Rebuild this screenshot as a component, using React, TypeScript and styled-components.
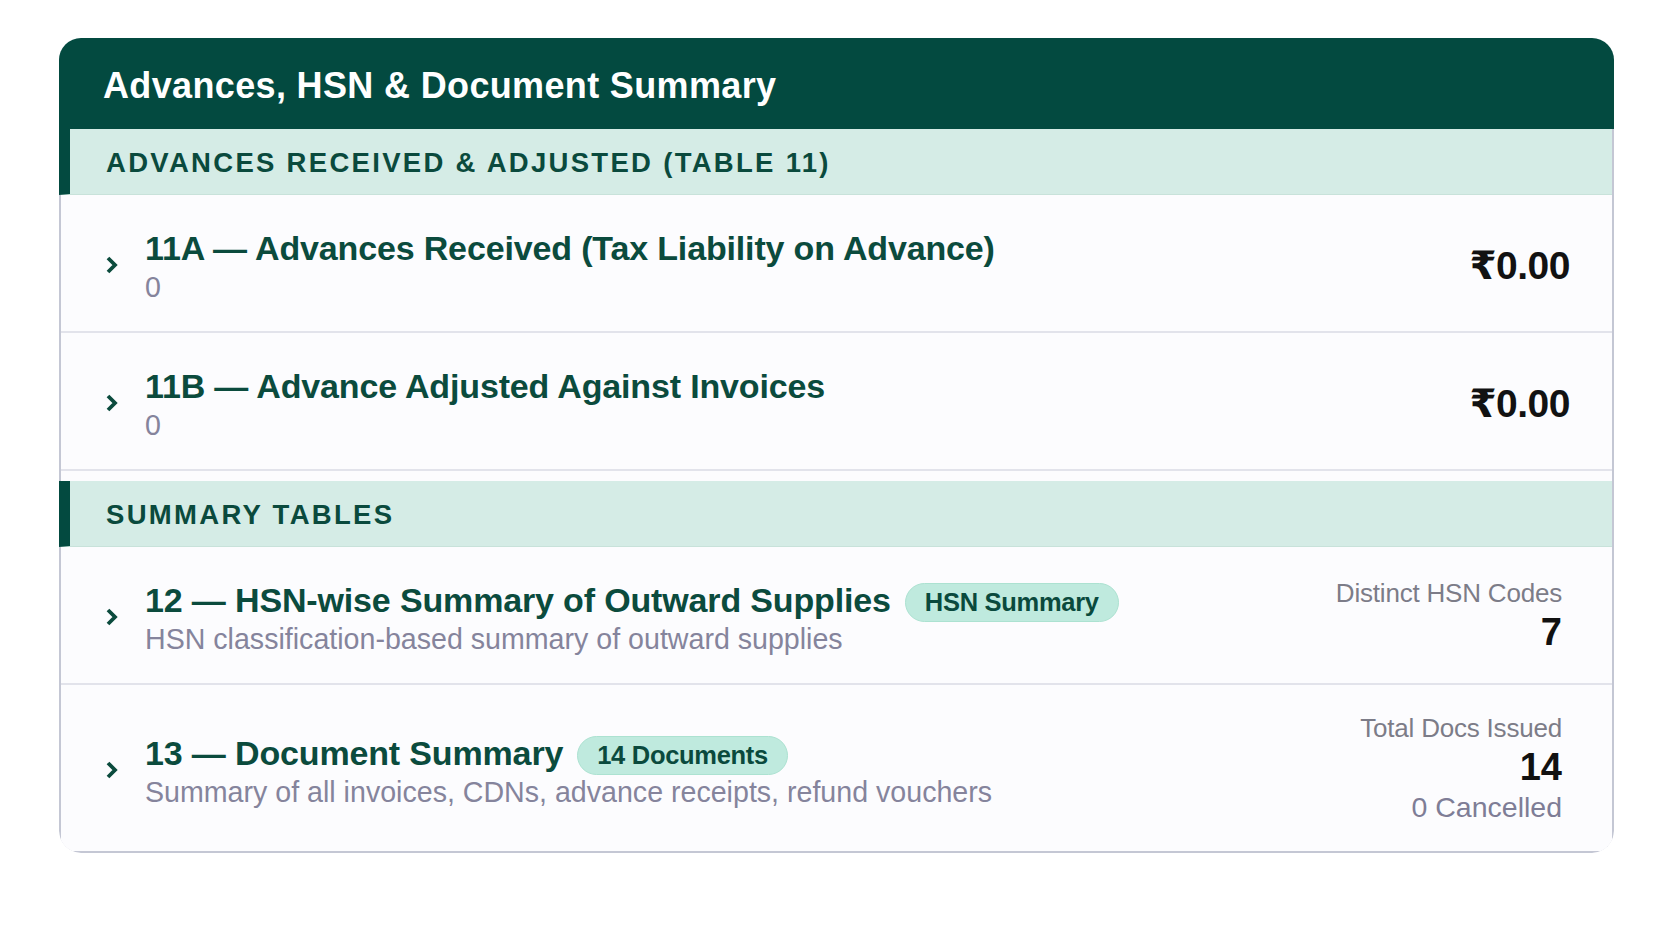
import React from "react";
import styled, { createGlobalStyle } from "styled-components";

const GlobalStyle = createGlobalStyle`
  html, body {
    margin: 0;
    padding: 0;
    background: #ffffff;
  }
  body {
    font-family: "Liberation Sans", Arial, "DejaVu Sans", sans-serif;
  }
`;

type Row = {
  code: string;
  title: string;
  sub: string;
  badge?: string;
  amount?: string;
  stat?: { label: string; value: string; note?: string };
};

type Section = { heading: string; rows: Row[] };

const sections: Section[] = [
  {
    heading: "Advances Received & Adjusted (Table 11)",
    rows: [
      {
        code: "11A",
        title: "Advances Received (Tax Liability on Advance)",
        sub: "0",
        amount: "₹0.00",
      },
      {
        code: "11B",
        title: "Advance Adjusted Against Invoices",
        sub: "0",
        amount: "₹0.00",
      },
    ],
  },
  {
    heading: "Summary Tables",
    rows: [
      {
        code: "12",
        title: "HSN-wise Summary of Outward Supplies",
        sub: "HSN classification-based summary of outward supplies",
        badge: "HSN Summary",
        stat: { label: "Distinct HSN Codes", value: "7" },
      },
      {
        code: "13",
        title: "Document Summary",
        sub: "Summary of all invoices, CDNs, advance receipts, refund vouchers",
        badge: "14 Documents",
        stat: { label: "Total Docs Issued", value: "14", note: "0 Cancelled" },
      },
    ],
  },
];

const Page = styled.div`
  padding: 38px 58px 40px 59px;
`;

const Card = styled.div`
  border-radius: 22px;
  overflow: hidden;
`;

const Header = styled.div`
  height: 91px;
  display: flex;
  align-items: center;
  padding: 5px 44px 0;
  box-sizing: border-box;
  background: #034a40;
  color: #ffffff;
  font-size: 36px;
  font-weight: 700;
  letter-spacing: 0.35px;
`;

const Body = styled.div`
  border: 2px solid #c4c7d4;
  border-top: 0;
  border-radius: 0 0 22px 22px;
  background: #fcfcfe;
`;

const Group = styled.section<{ $first?: boolean }>`
  margin-top: ${(p) => (p.$first ? "0" : "10px")};
`;

const Band = styled.div`
  height: 66px;
  margin-left: -2px;
  display: flex;
  align-items: center;
  padding: 3px 0 0 36px;
  box-sizing: border-box;
  background: #d5ece6;
  border-left: 11px solid #034a40;
  border-bottom: 1px solid #c8e2da;
  color: #0a4a3d;
  font-size: 27.5px;
  font-weight: 700;
  letter-spacing: 2.3px;
  text-transform: uppercase;
`;

const RowWrap = styled.div<{ $last?: boolean }>`
  display: flex;
  align-items: center;
  min-height: 138px;
  box-sizing: border-box;
  padding: 26px 42px 26px 44px;
  border-bottom: ${(p) => (p.$last ? "0" : "2px solid #e2e3eb")};
  background: #fcfcfe;
`;

const Chevron = styled.div`
  width: 40px;
  flex: none;
  display: flex;
  align-items: center;
  padding-top: 4px;
`;

const Main = styled.div`
  flex: 1;
  min-width: 0;
  padding-top: 6px;
`;

const TitleLine = styled.div`
  display: flex;
  align-items: center;
  gap: 14px;
  height: 41px;
`;

const Title = styled.span`
  color: #0b4b3d;
  font-size: 34px;
  font-weight: 700;
  letter-spacing: -0.15px;
  white-space: nowrap;
`;

const Badge = styled.span`
  display: inline-flex;
  align-items: center;
  height: 39px;
  margin-top: 4px;
  padding: 0 19px;
  box-sizing: border-box;
  border-radius: 20px;
  background: #bfeade;
  border: 1px solid #ace2d1;
  color: #0a4a3d;
  font-size: 25.5px;
  font-weight: 700;
  letter-spacing: -0.3px;
  white-space: nowrap;
`;

const Sub = styled.div`
  color: #85849c;
  font-size: 28.6px;
  line-height: 36px;
  white-space: nowrap;
`;

const Amount = styled.div`
  color: #121212;
  font-size: 39px;
  font-weight: 700;
  letter-spacing: -0.5px;
  padding-top: 4px;
`;

const Stat = styled.div`
  margin-right: 8px;
  text-align: right;
`;

const StatLabel = styled.div`
  color: #7c7c88;
  font-size: 26px;
  line-height: 34px;
  letter-spacing: -0.2px;
`;

const StatValue = styled.div`
  color: #111111;
  font-size: 38px;
  font-weight: 700;
  line-height: 44px;
`;

const StatNote = styled.div`
  color: #7e7d96;
  font-size: 28.5px;
  line-height: 36px;
`;

function ChevronIcon() {
  return (
    <svg width="14" height="20" viewBox="0 0 14 20">
      <path
        d="M3 3 L10 10 L3 17"
        fill="none"
        stroke="#0b4b3d"
        strokeWidth="3.8"
        strokeLinejoin="miter"
      />
    </svg>
  );
}

function SummaryRow({ row, last }: { row: Row; last: boolean }) {
  return (
    <RowWrap $last={last}>
      <Chevron>
        <ChevronIcon />
      </Chevron>
      <Main>
        <TitleLine>
          <Title>
            {row.code} — {row.title}
          </Title>
          {row.badge && <Badge>{row.badge}</Badge>}
        </TitleLine>
        <Sub>{row.sub}</Sub>
      </Main>
      {row.amount && <Amount>{row.amount}</Amount>}
      {row.stat && (
        <Stat>
          <StatLabel>{row.stat.label}</StatLabel>
          <StatValue>{row.stat.value}</StatValue>
          {row.stat.note && <StatNote>{row.stat.note}</StatNote>}
        </Stat>
      )}
    </RowWrap>
  );
}

export default function App() {
  return (
    <>
      <GlobalStyle />
      <Page>
        <Card>
          <Header>Advances, HSN &amp; Document Summary</Header>
          <Body>
            {sections.map((section, si) => (
              <Group key={section.heading} $first={si === 0}>
                <Band>{section.heading}</Band>
                {section.rows.map((row, ri) => (
                  <SummaryRow
                    key={row.code}
                    row={row}
                    last={si === sections.length - 1 && ri === section.rows.length - 1}
                  />
                ))}
              </Group>
            ))}
          </Body>
        </Card>
      </Page>
    </>
  );
}
